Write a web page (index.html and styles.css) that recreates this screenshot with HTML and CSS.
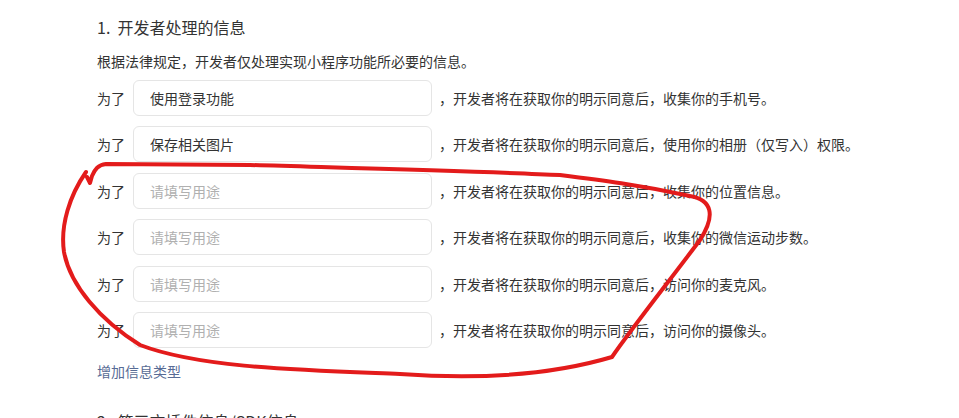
FILE: index.html
```html
<!DOCTYPE html>
<html lang="zh-CN">
<head>
    <meta charset="UTF-8">
    <meta name="viewport" content="width=device-width, initial-scale=1.0">
    <title>用户隐私保护指引</title>
    <link rel="stylesheet" href="styles.css">
</head>
<body>
    <div class="page">
        <h2 class="section-title">1.&nbsp; 开发者处理的信息</h2>
        <p class="desc">根据法律规定，开发者仅处理实现小程序功能所必要的信息。</p>

        <div class="info-list">
            <div class="info-row">
                <span class="label">为了</span>
                <input class="purpose" type="text" value="使用登录功能" placeholder="请填写用途">
                <span class="suffix">，开发者将在获取你的明示同意后，收集你的手机号。</span>
            </div>
            <div class="info-row">
                <span class="label">为了</span>
                <input class="purpose" type="text" value="保存相关图片" placeholder="请填写用途">
                <span class="suffix">，开发者将在获取你的明示同意后，使用你的相册（仅写入）权限。</span>
            </div>
            <div class="info-row">
                <span class="label">为了</span>
                <input class="purpose" type="text" placeholder="请填写用途">
                <span class="suffix">，开发者将在获取你的明示同意后，收集你的位置信息。</span>
            </div>
            <div class="info-row">
                <span class="label">为了</span>
                <input class="purpose" type="text" placeholder="请填写用途">
                <span class="suffix">，开发者将在获取你的明示同意后，收集你的微信运动步数。</span>
            </div>
            <div class="info-row">
                <span class="label">为了</span>
                <input class="purpose" type="text" placeholder="请填写用途">
                <span class="suffix">，开发者将在获取你的明示同意后，访问你的麦克风。</span>
            </div>
            <div class="info-row">
                <span class="label">为了</span>
                <input class="purpose" type="text" placeholder="请填写用途">
                <span class="suffix">，开发者将在获取你的明示同意后，访问你的摄像头。</span>
            </div>
        </div>

        <a class="add-link" href="#">增加信息类型</a>

        <h2 class="section-title next">2.&nbsp; 第三方插件信息/SDK信息</h2>
    </div>

    <!-- hand-drawn red mark over the empty rows -->
    <svg class="scribble" width="959" height="418" viewBox="0 0 959 418">
        <path d="M86 172 C70 195, 60 225, 64 252 C70 285, 100 320, 140 345 C200 368, 300 370, 400 374 C470 379, 545 377, 612 357 C632 328, 670 280, 700 240 C716 215, 712 200, 690 196 C640 185, 600 180, 560 175 C500 172, 350 168, 250 165 L106 164 C98 165, 95 169, 92 176 L90 183 L87 177" />
    </svg>
</body>
</html>
```

FILE: styles.css
```css
body {
    margin: 0;
    background-color: #fff;
    color: #333;
    font-family: "Noto Sans CJK SC", "Liberation Sans", sans-serif;
    font-size: 14px;
    position: relative;
    overflow: hidden;
}

.page {
    padding-left: 97px;
    height: 418px;
}

.section-title {
    margin: 0;
    padding-top: 15px;
    font-size: 16px;
    font-weight: normal;
    line-height: 24px;
    color: #333;
}

.section-title.next {
    padding-top: 28px;
}

.desc {
    margin: 11px 0 0;
    line-height: 22px;
}

.info-list {
    margin-top: 8px;
    display: flex;
    flex-direction: column;
    gap: 10.4px;
}

.info-row {
    display: flex;
    align-items: center;
    height: 36px;
    white-space: nowrap;
}

.label {
    width: 36px;
    flex-shrink: 0;
}

.purpose {
    width: 299px;
    height: 36px;
    box-sizing: border-box;
    padding: 0 16px;
    border: 1px solid #e5e5e5;
    border-radius: 6px;
    font-family: inherit;
    font-size: 14px;
    color: #333;
    outline: none;
}

.purpose::placeholder {
    color: #b0b0b0;
}

.suffix {
    margin-left: 7px;
}

.add-link {
    display: inline-block;
    margin-top: 13px;
    line-height: 20px;
    color: #576b95;
    text-decoration: none;
}

.scribble {
    position: absolute;
    top: 0;
    left: 0;
    pointer-events: none;
}

.scribble path {
    fill: none;
    stroke: #e31b1b;
    stroke-width: 4;
    stroke-linecap: round;
    stroke-linejoin: round;
}
```
